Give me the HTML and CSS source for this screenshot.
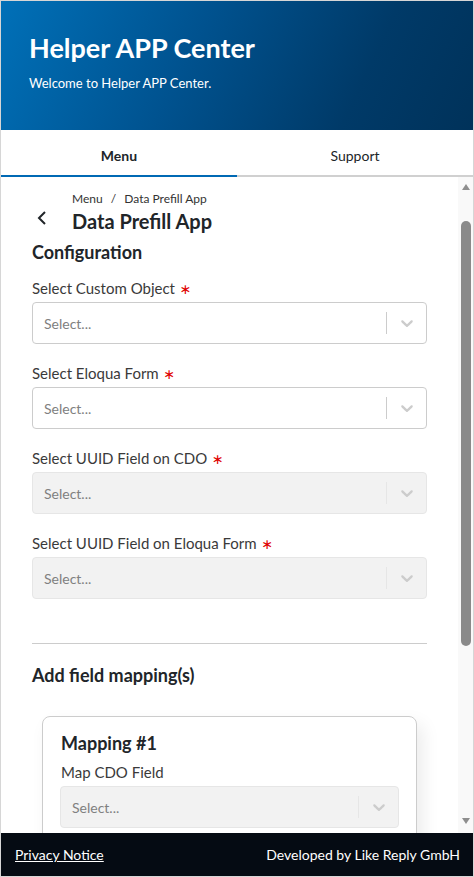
FILE: index.html
```html
<!DOCTYPE html>
<html lang="en">
<head>
<meta charset="utf-8">
<title>Helper APP Center</title>
<link rel="stylesheet" href="styles.css">
</head>
<body>
<div class="frame">
  <header class="hero">
    <h1 class="hero-title">Helper APP Center</h1>
    <p class="hero-sub">Welcome to Helper APP Center.</p>
  </header>
  <nav class="tabs">
    <div class="tab tab-active">Menu</div>
    <div class="tab">Support</div>
  </nav>
  <div class="body">
    <main class="content">
      <div class="page-head">
        <div class="back">
          <svg width="12" height="16" viewBox="0 0 12 16"><path d="M9 2 L3 8 L9 14" fill="none" stroke="#212529" stroke-width="2"/></svg>
        </div>
        <div class="page-titles">
          <div class="crumbs">Menu <span class="crumb-sep">/</span> Data Prefill App</div>
          <h2 class="page-title">Data Prefill App</h2>
        </div>
      </div>
      <h3 class="section-title">Configuration</h3>

      <div class="field">
        <label class="label">Select Custom Object <span class="req">∗</span></label>
        <div class="select">
          <span class="placeholder">Select...</span>
          <span class="sep"></span>
          <span class="indicator"><svg width="20" height="20" viewBox="0 0 20 20"><path d="M4.516 7.548c0.436-0.446 1.043-0.481 1.576 0l3.908 3.747 3.908-3.747c0.533-0.481 1.141-0.446 1.574 0 0.436 0.445 0.408 1.197 0 1.615-0.406 0.418-4.695 4.502-4.695 4.502-0.217 0.223-0.502 0.335-0.787 0.335s-0.57-0.112-0.789-0.335c0 0-4.287-4.084-4.695-4.502s-0.436-1.17 0-1.615z"/></svg></span>
        </div>
      </div>

      <div class="field">
        <label class="label">Select Eloqua Form <span class="req">∗</span></label>
        <div class="select">
          <span class="placeholder">Select...</span>
          <span class="sep"></span>
          <span class="indicator"><svg width="20" height="20" viewBox="0 0 20 20"><path d="M4.516 7.548c0.436-0.446 1.043-0.481 1.576 0l3.908 3.747 3.908-3.747c0.533-0.481 1.141-0.446 1.574 0 0.436 0.445 0.408 1.197 0 1.615-0.406 0.418-4.695 4.502-4.695 4.502-0.217 0.223-0.502 0.335-0.787 0.335s-0.57-0.112-0.789-0.335c0 0-4.287-4.084-4.695-4.502s-0.436-1.17 0-1.615z"/></svg></span>
        </div>
      </div>

      <div class="field">
        <label class="label">Select UUID Field on CDO <span class="req">∗</span></label>
        <div class="select select-disabled">
          <span class="placeholder">Select...</span>
          <span class="sep"></span>
          <span class="indicator"><svg width="20" height="20" viewBox="0 0 20 20"><path d="M4.516 7.548c0.436-0.446 1.043-0.481 1.576 0l3.908 3.747 3.908-3.747c0.533-0.481 1.141-0.446 1.574 0 0.436 0.445 0.408 1.197 0 1.615-0.406 0.418-4.695 4.502-4.695 4.502-0.217 0.223-0.502 0.335-0.787 0.335s-0.57-0.112-0.789-0.335c0 0-4.287-4.084-4.695-4.502s-0.436-1.17 0-1.615z"/></svg></span>
        </div>
      </div>

      <div class="field">
        <label class="label">Select UUID Field on Eloqua Form <span class="req">∗</span></label>
        <div class="select select-disabled">
          <span class="placeholder">Select...</span>
          <span class="sep"></span>
          <span class="indicator"><svg width="20" height="20" viewBox="0 0 20 20"><path d="M4.516 7.548c0.436-0.446 1.043-0.481 1.576 0l3.908 3.747 3.908-3.747c0.533-0.481 1.141-0.446 1.574 0 0.436 0.445 0.408 1.197 0 1.615-0.406 0.418-4.695 4.502-4.695 4.502-0.217 0.223-0.502 0.335-0.787 0.335s-0.57-0.112-0.789-0.335c0 0-4.287-4.084-4.695-4.502s-0.436-1.17 0-1.615z"/></svg></span>
        </div>
      </div>

      <hr class="divider">
      <h3 class="section-title section-title-2">Add field mapping(s)</h3>

      <div class="card">
        <h4 class="card-title">Mapping #1</h4>
        <label class="label card-label">Map CDO Field</label>
        <div class="select select-disabled">
          <span class="placeholder">Select...</span>
          <span class="sep"></span>
          <span class="indicator"><svg width="20" height="20" viewBox="0 0 20 20"><path d="M4.516 7.548c0.436-0.446 1.043-0.481 1.576 0l3.908 3.747 3.908-3.747c0.533-0.481 1.141-0.446 1.574 0 0.436 0.445 0.408 1.197 0 1.615-0.406 0.418-4.695 4.502-4.695 4.502-0.217 0.223-0.502 0.335-0.787 0.335s-0.57-0.112-0.789-0.335c0 0-4.287-4.084-4.695-4.502s-0.436-1.17 0-1.615z"/></svg></span>
        </div>
      </div>
    </main>
    <div class="scrollbar">
      <div class="sb-arrow sb-up"></div>
      <div class="sb-track"><div class="sb-thumb"></div></div>
      <div class="sb-arrow sb-down"></div>
    </div>
  </div>
  <footer class="footer">
    <a class="footer-link" href="#">Privacy Notice</a>
    <span class="footer-text">Developed by Like Reply GmbH</span>
  </footer>
</div>
</body>
</html>
```

FILE: styles.css
```css
* { box-sizing: border-box; }
html, body { margin: 0; padding: 0; }
body {
  font-family: Lato, "Open Sans", sans-serif;
  color: #212529;
  background: #fff;
}
.frame {
  width: 474px;
  height: 877px;
  border: 1px solid #d6d6d6;
  display: flex;
  flex-direction: column;
  overflow: hidden;
}
.hero {
  height: 129px;
  flex: none;
  background: linear-gradient(115deg, #0070b8 0%, #00528f 40%, #003a68 75%, #00325a 100%);
  color: #fff;
  padding: 30px 0 0 28px;
}
.hero-title {
  margin: 0;
  font-size: 27px;
  line-height: 34px;
  font-weight: 700;
}
.hero-sub {
  margin: 9px 0 0;
  font-size: 13px;
  line-height: 18px;
}
.tabs {
  display: flex;
  flex: none;
  height: 47px;
}
.tab {
  flex: 1;
  display: flex;
  align-items: center;
  justify-content: center;
  font-size: 14px;
  border-bottom: 2px solid #d0d0d0;
  color: #212529;
  padding-top: 6px;
}
.tab-active {
  border-bottom-color: #0069b4;
  font-weight: 700;
}
.body {
  flex: 1;
  display: flex;
  min-height: 0;
}
.content {
  flex: 1;
  overflow: hidden;
  padding: 14px 31px 0 31px;
}
.page-head {
  display: flex;
  align-items: center;
}
.back {
  width: 40px;
  padding-left: 4px;
  padding-top: 10px;
  display: flex;
}
.crumbs {
  font-size: 12px;
  line-height: 16px;
  color: #333;
}
.crumb-sep { padding: 0 5px; }
.page-title {
  margin: 0;
  font-size: 20px;
  line-height: 28px;
  font-weight: 700;
}
.section-title {
  margin: 5px 0 0;
  font-size: 18px;
  line-height: 24px;
  font-weight: 700;
}
.field { margin-top: 14px; }
.field + .field { margin-top: 19px; }
.label {
  display: block;
  font-size: 15px;
  line-height: 20px;
  height: 20px;
  color: #3a3a3a;
  margin-bottom: 4px;
}
.req {
  color: #e00000;
  font-family: "DejaVu Sans", sans-serif;
  font-size: 14px;
  line-height: 0;
  padding-left: 1px;
}
.select {
  height: 42px;
  display: flex;
  align-items: center;
  border: 1px solid #cccccc;
  border-radius: 4px;
  background: #fff;
  padding-left: 11px;
}
.placeholder {
  flex: 1;
  font-size: 14px;
  color: #808080;
}
.sep {
  width: 1px;
  height: 22px;
  background: #cccccc;
}
.indicator {
  padding: 0 9px 0 10px;
  display: flex;
  fill: #cccccc;
}
.select-disabled {
  background: #f2f2f2;
  border-color: #e6e6e6;
}
.select-disabled .sep { background: #e6e6e6; }
.divider {
  margin: 44px 0 0;
  border: 0;
  border-top: 1px solid #cccccc;
}
.section-title-2 { margin-top: 19px; }
.card {
  margin: 29px 10px 0;
  border: 1px solid #cccccc;
  border-radius: 8px;
  padding: 14px 17px 20px;
  box-shadow: 6px 8px 18px rgba(0,0,0,0.08);
}
.card-title {
  margin: 0 0 0 1px;
  font-size: 18px;
  line-height: 24px;
  font-weight: 700;
}
.card-label { margin-top: 7px; padding-left: 1px; }
.scrollbar {
  width: 15px;
  flex: none;
  background: #f9f9f9;
  display: flex;
  flex-direction: column;
  align-items: center;
}
.sb-arrow {
  width: 0;
  height: 0;
  border-left: 4.5px solid transparent;
  border-right: 4.5px solid transparent;
}
.sb-up {
  margin-top: 7px;
  border-bottom: 6px solid #8e8e8e;
}
.sb-down {
  margin-bottom: 9px;
  border-top: 6px solid #8e8e8e;
}
.sb-track {
  flex: 1;
  width: 100%;
  display: flex;
  justify-content: center;
  padding-top: 31px;
}
.sb-thumb {
  width: 10px;
  height: 425px;
  background: #8a8a8a;
  border-radius: 5px;
}
.footer {
  height: 43px;
  flex: none;
  background: #050b13;
  color: #fff;
  display: flex;
  align-items: center;
  justify-content: space-between;
  padding: 0 13px 0 14px;
  font-size: 14px;
}
.footer-link { color: #fff; text-decoration: underline; }
```
